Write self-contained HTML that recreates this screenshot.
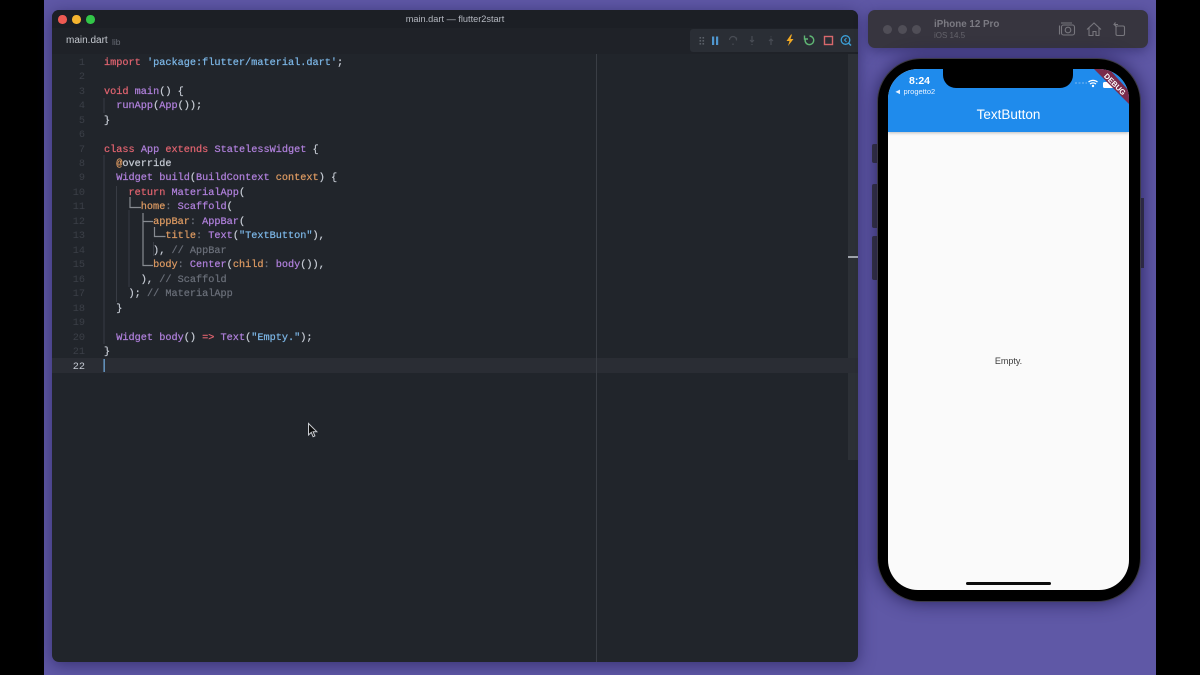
<!DOCTYPE html>
<html><head><meta charset="utf-8"><style>
html,body{margin:0;padding:0;background:#000}
#s{position:relative;width:1200px;height:675px;overflow:hidden;background:#000;font-family:"Liberation Sans",sans-serif}
#f{position:absolute;left:0;top:0;width:1200px;height:675px;filter:blur(.35px)}
#bg{position:absolute;left:44px;top:0;width:1112px;height:675px;background:#5f58a6}
#win{position:absolute;left:52px;top:10px;width:806px;height:652px;background:#21252b;border-radius:7px;overflow:hidden}
#ws{position:absolute;left:52px;top:10px;width:806px;height:652px;border-radius:7px;box-shadow:0 3px 16px rgba(30,25,80,.6)}
#tb{position:absolute;left:0;top:0;width:806px;height:18px;background:#1c1f25}
#tabs{position:absolute;left:0;top:18px;width:806px;height:26px;background:#1f2228}
.a{position:absolute;white-space:pre}
.c{font-family:"Liberation Mono",monospace;font-size:10.22px;line-height:14px;color:#c5cad3;-webkit-text-stroke:.22px currentColor;margin-top:.7px}
.n{font-family:"Liberation Mono",monospace;font-size:10.22px;line-height:14px;color:#3b3f47;width:34px;text-align:right;left:51px;margin-top:.7px}
.k{color:#e0636f}.p{color:#b080dc}.s{color:#7cb6e6}.o{color:#dd9a62}.g{color:#6a6f79}.w{color:#c5cad3}
#sim{position:absolute;left:868px;top:10px;width:280px;height:38px;background:#37353f;border-radius:7px;box-shadow:0 3px 12px rgba(30,25,80,.5)}
#ph{position:absolute;left:877px;top:58px;width:264px;height:544px;box-sizing:border-box;background:#000;border-radius:44px;border:1.5px solid #3c3a46;box-shadow:0 0 18px rgba(30,25,80,.85)}
#scr{position:absolute;left:888px;top:69px;width:241px;height:521px;background:#fafafa;border-radius:30px;overflow:hidden}
#bar{position:absolute;left:0;top:0;width:241px;height:63px;background:#1f8bec;box-shadow:0 1px 3px rgba(0,0,0,.25)}
#notch{position:absolute;left:55px;top:0;width:130px;height:19px;background:#000;border-radius:0 0 13px 13px}
</style></head><body><div id="s"><div id="f">
<div id="bg"></div>
<div id="ws"></div>
<div id="win">
<div id="tb"></div><div id="tabs"></div>
<div class="a" style="left:6px;top:5px;width:8.5px;height:8.5px;border-radius:50%;background:#ee5a52"></div>
<div class="a" style="left:20px;top:5px;width:8.5px;height:8.5px;border-radius:50%;background:#f5b42f"></div>
<div class="a" style="left:34px;top:5px;width:8.5px;height:8.5px;border-radius:50%;background:#32c648"></div>
<div class="a" style="left:0;width:806px;top:3px;text-align:center;font-size:9.2px;line-height:12px;color:#b4b8c0">main.dart — flutter2start</div>
<div class="a" style="left:14px;top:25px;font-size:10px;line-height:12px;color:#c5c9d0">main.dart</div>
<div class="a" style="left:60px;top:25.5px;font-size:8.5px;line-height:12px;color:#6a6e76">lib</div>
<div class="a" style="left:638px;top:19px;width:168px;height:23px;background:#2a2e35;border-radius:3px 0 0 3px"></div>
<div class="a" style="left:796px;top:44px;width:10px;height:406px;background:#2c3036"></div>
<div class="a" style="left:796px;top:246px;width:10px;height:1.5px;background:#9ea3aa"></div>
<div class="a" style="left:0;top:348px;width:806px;height:15px;background:#2a2d34"></div>
<div class="a" style="left:543.500px;top:44px;width:1.5px;height:608px;background:#3a3e45"></div>
<svg class="a" style="left:638px;top:19px" width="168" height="23" viewBox="0 0 168 23" fill="none">
<g fill="#5b6068"><rect x="9.500" y="8" width="1.6" height="1.6"/><rect x="12.500" y="8" width="1.6" height="1.6"/><rect x="9.500" y="11" width="1.6" height="1.6"/><rect x="12.500" y="11" width="1.6" height="1.6"/><rect x="9.500" y="14" width="1.6" height="1.6"/><rect x="12.500" y="14" width="1.6" height="1.6"/></g>
<rect x="22" y="7.500" width="2.200" height="8.500" fill="#4f97cf"/><rect x="26" y="7.500" width="2.200" height="8.500" fill="#4f97cf"/>
<path d="M39.500 11a3.500 3.500 0 0 1 7 0M46.500 8.500v3M43 14.500v1.500M62 7v6M60 11l2 2 2-2M62 15v1M81 7.500v.8M81 16v-6M79 12l2-2 2 2" stroke="#484c54" stroke-width="1.200"/>
<path d="M101 5.500l-4.500 6.500h3l-1.500 5 5.500-7h-3l1.500-4.500z" fill="#f0a823"/>
<path d="M119.500 7a4.300 4.300 0 1 1-4 2.500M114.500 6.500v3.500h3.500" stroke="#5fb574" stroke-width="1.400"/>
<rect x="134.500" y="7.500" width="8" height="8" stroke="#d8686c" stroke-width="1.400"/>
<circle cx="155.500" cy="11" r="4.300" stroke="#3c9fd6" stroke-width="1.300"/><path d="M158.500 14l2.500 2.500" stroke="#3c9fd6" stroke-width="1.500"/><path d="M156.500 9l-2 2 2 2" stroke="#3c9fd6"/>
</svg>
<svg class="a" style="left:0;top:0" width="806" height="652" fill="none">
<g stroke="#383c44" stroke-width="1">
<path d="M52 88v15M52 145v189M64.500 176v116M77 200v77M101.500 232v14"/>
</g>
<g stroke="#878b91" stroke-width="1.200">
<path d="M78 187v10.500h11M91 203v52.500h10M91 211.500h10M102.500 217v9.500h11"/>
</g>
<rect x="51.500" y="349" width="1.300" height="13" fill="#6fa7d8"/>
</svg>
</div>

<div class="a n" style="top:55px">1</div><div class="a n" style="top:69.500px">2</div><div class="a n" style="top:84px">3</div><div class="a n" style="top:98.400px">4</div><div class="a n" style="top:112.900px">5</div><div class="a n" style="top:127.400px">6</div><div class="a n" style="top:141.900px">7</div><div class="a n" style="top:156.300px">8</div><div class="a n" style="top:170.800px">9</div><div class="a n" style="top:185.300px">10</div><div class="a n" style="top:199.800px">11</div><div class="a n" style="top:214.200px">12</div><div class="a n" style="top:228.700px">13</div><div class="a n" style="top:243.200px">14</div><div class="a n" style="top:257.700px">15</div><div class="a n" style="top:272.100px">16</div><div class="a n" style="top:286.600px">17</div><div class="a n" style="top:301.100px">18</div><div class="a n" style="top:315.600px">19</div><div class="a n" style="top:330px">20</div><div class="a n" style="top:344.500px">21</div><div class="a n" style="top:359px;color:#c5cad3">22</div>

<div class="a c" style="left:104px;top:55px"><span class="k">import</span> <span class="s">'package:flutter/material.dart'</span>;</div>
<div class="a c" style="left:104px;top:84px"><span class="k">void</span> <span class="p">main</span>() {</div>
<div class="a c" style="left:104px;top:98.400px">  <span class="p">runApp</span>(<span class="p">App</span>());</div>
<div class="a c" style="left:104px;top:112.900px">}</div>
<div class="a c" style="left:104px;top:141.900px"><span class="k">class</span> <span class="p">App</span> <span class="k">extends</span> <span class="p">StatelessWidget</span> {</div>
<div class="a c" style="left:104px;top:156.300px">  <span class="o">@</span>override</div>
<div class="a c" style="left:104px;top:170.800px">  <span class="p">Widget</span> <span class="p">build</span>(<span class="p">BuildContext</span> <span class="o">context</span>) {</div>
<div class="a c" style="left:104px;top:185.300px">    <span class="k">return</span> <span class="p">MaterialApp</span>(</div>
<div class="a c" style="left:104px;top:199.800px">      <span class="o">home</span><span class="g">:</span> <span class="p">Scaffold</span>(</div>
<div class="a c" style="left:104px;top:214.200px">        <span class="o">appBar</span><span class="g">:</span> <span class="p">AppBar</span>(</div>
<div class="a c" style="left:104px;top:228.700px">          <span class="o">title</span><span class="g">:</span> <span class="p">Text</span>(<span class="s">"TextButton"</span>),</div>
<div class="a c" style="left:104px;top:243.200px">        ), <span class="g">// AppBar</span></div>
<div class="a c" style="left:104px;top:257.700px">        <span class="o">body</span><span class="g">:</span> <span class="p">Center</span>(<span class="o">child</span><span class="g">:</span> <span class="p">body</span>()),</div>
<div class="a c" style="left:104px;top:272.100px">      ), <span class="g">// Scaffold</span></div>
<div class="a c" style="left:104px;top:286.600px">    ); <span class="g">// MaterialApp</span></div>
<div class="a c" style="left:104px;top:301.100px">  }</div>
<div class="a c" style="left:104px;top:330px">  <span class="p">Widget</span> <span class="p">body</span>() <span class="k">=&gt;</span> <span class="p">Text</span>(<span class="s">"Empty."</span>);</div>
<div class="a c" style="left:104px;top:344.500px">}</div>

<div id="sim">
<div class="a" style="left:15px;top:15px;width:9px;height:9px;border-radius:50%;background:#504e57"></div>
<div class="a" style="left:29.500px;top:15px;width:9px;height:9px;border-radius:50%;background:#504e57"></div>
<div class="a" style="left:44px;top:15px;width:9px;height:9px;border-radius:50%;background:#504e57"></div>
<div class="a" style="left:66px;top:8.500px;font-size:9.800px;line-height:12px;font-weight:bold;color:#7b7a82">iPhone 12 Pro</div>
<div class="a" style="left:66px;top:20px;font-size:8px;line-height:11px;color:#65646c">iOS 14.5</div>
<svg class="a" style="left:190px;top:10px" width="84" height="20" fill="none" stroke="#77767d" stroke-width="1.100">
<path d="M3 3h11M1.500 5.500v9"/><rect x="3.500" y="5" width="13" height="10" rx="2"/><circle cx="10" cy="10" r="2.800"/>
<path d="M29 9.500l7-6.500 7 6.500M31 8v7.500h4v-4h3v4h3V8"/>
<rect x="58" y="6" width="8.500" height="9.500" rx="1.500"/><path d="M60 4.500h-2.500v2M57.500 2.500l-1.500 2 2 1.500"/>
</svg>
</div>

<div class="a" style="left:872px;top:144px;width:5px;height:19px;background:#35333c;border-radius:2px 0 0 2px"></div>
<div class="a" style="left:872px;top:184px;width:5px;height:44px;background:#35333c;border-radius:2px 0 0 2px"></div>
<div class="a" style="left:872px;top:236px;width:5px;height:44px;background:#35333c;border-radius:2px 0 0 2px"></div>
<div class="a" style="left:1141px;top:198px;width:3px;height:70px;background:#35333c"></div>
<div id="ph"></div>
<div id="scr">
<div id="bar"></div>
<div id="notch"></div>
<div class="a" style="left:21px;top:6px;font-size:10.500px;line-height:12px;font-weight:bold;color:#fff">8:24</div>
<div class="a" style="left:6px;top:18px;font-size:7.500px;line-height:9px;color:#e8f2ff">◄ progetto2</div>
<div class="a" style="left:0;width:241px;text-align:center;top:38px;font-size:13.500px;line-height:16px;color:#fff">TextButton</div>
<div class="a" style="left:0;width:241px;text-align:center;top:287px;font-size:9px;line-height:11px;color:#3c3c3c">Empty.</div>
<svg class="a" style="left:0;top:0" width="241" height="63" fill="none">
<path d="M187 14h12" stroke="#7db8f0" stroke-width="1" stroke-dasharray="2 1.500"/>
<path d="M200.500 13a7 7 0 0 1 9 0M202 15a4.500 4.500 0 0 1 6 0" stroke="#fff" stroke-width="1.200"/><circle cx="205" cy="17" r="1.200" fill="#fff"/>
<rect x="215" y="13" width="14" height="6" rx="1.500" fill="#fff"/>
<path d="M206 0L241 35V22L221 0Z" fill="#7a2b4c"/>
<text x="0" y="0" transform="translate(215.500 7.500) rotate(45)" font-family="Liberation Sans,sans-serif" font-size="7.500" font-weight="bold" fill="#fff">DEBUG</text>
</svg>
<div class="a" style="left:78px;top:513px;width:85px;height:3px;border-radius:2px;background:#0c0c0c"></div>
</div>

<svg class="a" style="left:305px;top:421px" width="16" height="20" viewBox="0 0 16 20"><path d="M3.500 2.500v11.500l2.800-2.600 1.800 4.300 1.800-.8-1.800-4.200h3.700z" fill="#0d0d0d" stroke="#c9ccd1" stroke-width="1"/></svg>
</div></div></body></html>
